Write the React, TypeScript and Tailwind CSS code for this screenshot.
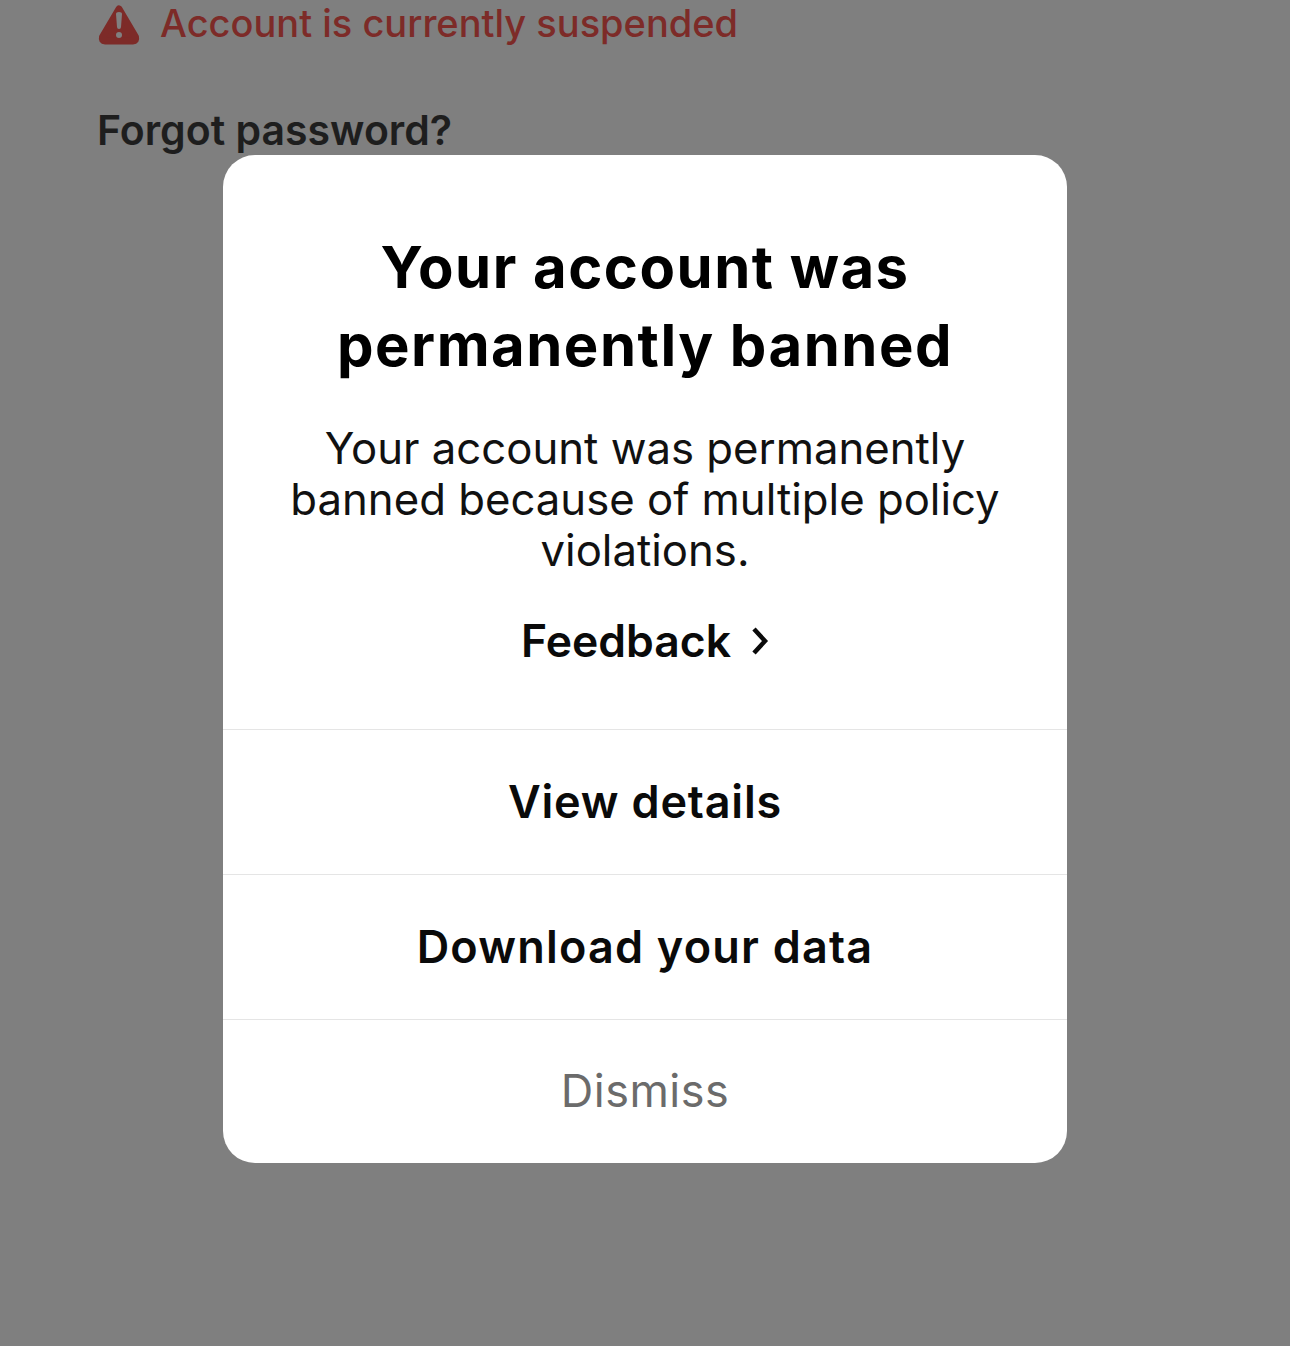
export default function App() {
  return (
    <div className="relative h-[1346px] w-[1290px] overflow-hidden bg-[#7f7f7f] font-['Inter',sans-serif]">
      {/* login screen behind the dimmed overlay */}
      <div className="flex items-center gap-[19px] pl-[97px]">
        <svg width="44" height="44" viewBox="0 0 44 44" className="shrink-0">
          <path d="M22 8 L38.5 36 Q39.5 40 36 40 L8 40 Q4.5 40 5.5 36 Z" fill="#7d2b28" stroke="#7d2b28" strokeWidth="7" strokeLinejoin="round" />
          <path d="M19 13 Q19 11 22 11 Q25 11 25 13 L24 26 Q24 28 22 28 Q20 28 20 26 Z" fill="#808080" />
          <circle cx="22" cy="34" r="3" fill="#808080" />
        </svg>
        <span className="text-[38px] font-medium leading-[46px] text-[#7d2b28]">Account is currently suspended</span>
      </div>
      <p className="pl-[97px] pt-[60px] text-[41px] font-semibold leading-[48px] text-[#1e1e1e]">Forgot password?</p>

      <div className="absolute left-[223px] top-[155px] w-[844px] overflow-hidden rounded-[32px] bg-white text-center">
        <div className="h-[574px] px-[40px] pt-[73px]">
          <h1 className="text-[58px] font-bold leading-[78px] tracking-[1.5px] text-black">
            Your account was
            <br />
            permanently banned
          </h1>
          <p className="pt-[39px] text-[43.7px] leading-[51px] text-[#111]">
            Your account was permanently
            <br />
            banned because of multiple policy
            <br />
            violations.
          </p>
          <div className="flex items-center justify-center gap-[20px] pt-[38px] text-[44.5px] font-semibold leading-[54px] text-[#0a0a0a]">
            Feedback
            <svg width="18" height="30" viewBox="0 0 18 30" fill="none" stroke="#0a0a0a" strokeWidth="4.5" strokeLinejoin="miter">
              <path d="M3 3 L14 15 L3 27" />
            </svg>
          </div>
        </div>
        <div className="flex h-[145px] items-center justify-center border-t border-[#e5e5e5] text-[45px] font-semibold tracking-[0.8px] text-[#0a0a0a]">View details</div>
        <div className="flex h-[145px] items-center justify-center border-t border-[#e5e5e5] text-[45px] font-semibold tracking-[1.2px] text-[#0a0a0a]">Download your data</div>
        <div className="flex h-[144px] items-center justify-center border-t border-[#e5e5e5] pb-[2px] text-[45px] tracking-[0.5px] text-[#6b6b6b]">Dismiss</div>
      </div>
    </div>
  );
}
